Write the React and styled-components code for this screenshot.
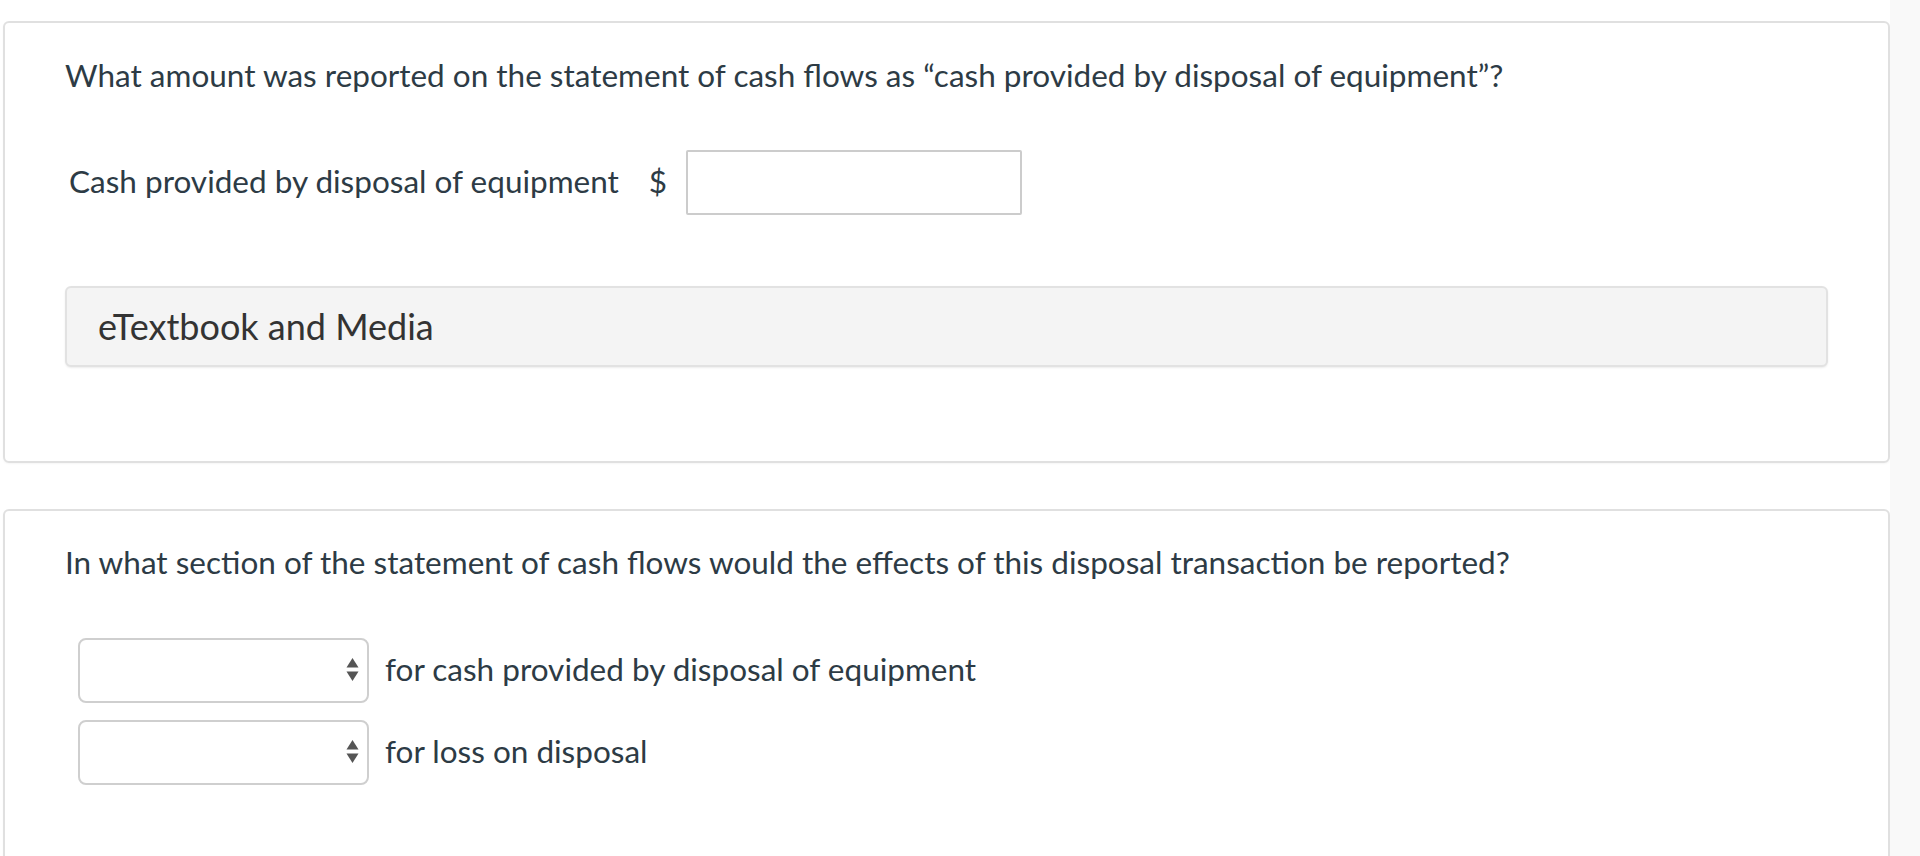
import React from "react";
import styled, { createGlobalStyle } from "styled-components";

const GlobalStyle = createGlobalStyle`
  html, body { margin: 0; padding: 0; background: #ffffff; }
  body { font-family: Lato, "Open Sans", "Liberation Sans", sans-serif; color: #2d3b45; }
  * { box-sizing: border-box; }
`;

const Page = styled.div`
  display: flex;
  min-height: 856px;
  width: 1920px;
  overflow: hidden;
`;

const Main = styled.main`
  flex: 1;
  padding: 21px 0 0 3px;
  display: flex;
  flex-direction: column;
  gap: 46px;
`;

const Aside = styled.aside`
  width: 30px;
  background: #f9f9f9;
`;

const Card = styled.section`
  border: 2px solid #e0e0e0;
  border-radius: 6px;
  box-shadow: 0 1px 2px rgba(0, 0, 0, 0.04);
  background: #fff;
  padding: ${(p) => p.$pad || "34px 60px 94px 60px"};
  min-height: ${(p) => p.$minH || "auto"};
`;

const Question = styled.p`
  margin: 0;
  font-size: 31.5px;
  line-height: 1.2;
  color: #2d3b45;
`;

const AnswerRow = styled.div`
  display: flex;
  align-items: center;
  margin-top: 55px;
  padding-left: 4px;
`;

const Label = styled.span`
  font-size: 31.5px;
  line-height: 1.2;
  color: #2d3b45;
`;

const Dollar = styled.span`
  font-size: 31.5px;
  line-height: 1.2;
  color: #2d3b45;
  margin-left: 30px;
`;

const AmountInput = styled.input`
  margin-left: 19px;
  width: 336px;
  height: 65px;
  border: 2px solid #cccccc;
  border-radius: 2px;
  background: #fff;
  font: inherit;
  font-size: 28px;
  padding: 0 12px;
  outline: none;
`;

const MediaBar = styled.div`
  margin-top: 71px;
  height: 81px;
  background: #f4f4f4;
  border: 2px solid #e2e2e2;
  border-radius: 6px;
  box-shadow: 0 1px 2px rgba(0, 0, 0, 0.08);
  display: flex;
  align-items: center;
  padding-left: 31px;
  font-size: 36px;
  color: #333333;
`;

const SelectList = styled.div`
  margin-top: 56px;
  display: flex;
  flex-direction: column;
  gap: 17px;
  padding-left: 13px;
`;

const SelectRow = styled.div`
  display: flex;
  align-items: center;
`;

const SelectBox = styled.div`
  width: 291px;
  height: 65px;
  border: 2px solid #cfcfcf;
  border-radius: 8px;
  background: #fff;
  display: flex;
  align-items: center;
  justify-content: flex-end;
  padding-right: 8px;
`;

const SelectText = styled.span`
  margin-left: 16px;
  font-size: 31.5px;
  line-height: 1.2;
  color: #2d3b45;
`;

const Arrows = () => (
  <svg width="13" height="24" viewBox="0 0 13 24" aria-hidden="true">
    <path d="M6.5 0 L12.5 9.5 L0.5 9.5 Z" fill="#555" />
    <path d="M0.5 13.5 L12.5 13.5 L6.5 23 Z" fill="#555" />
  </svg>
);

export default function App() {
  return (
    <>
      <GlobalStyle />
      <Page>
        <Main>
          <Card>
            <Question>
              What amount was reported on the statement of cash flows as “cash provided by disposal of equipment”?
            </Question>
            <AnswerRow>
              <Label>Cash provided by disposal of equipment</Label>
              <Dollar>$</Dollar>
              <AmountInput type="text" aria-label="Cash provided by disposal of equipment" />
            </AnswerRow>
            <MediaBar>eTextbook and Media</MediaBar>
          </Card>
          <Card $pad="33px 60px 80px 60px" $minH="400px">
            <Question>
              In what section of the statement of cash flows would the effects of this disposal transaction be reported?
            </Question>
            <SelectList>
              <SelectRow>
                <SelectBox><Arrows /></SelectBox>
                <SelectText>for cash provided by disposal of equipment</SelectText>
              </SelectRow>
              <SelectRow>
                <SelectBox><Arrows /></SelectBox>
                <SelectText>for loss on disposal</SelectText>
              </SelectRow>
            </SelectList>
          </Card>
        </Main>
        <Aside />
      </Page>
    </>
  );
}
